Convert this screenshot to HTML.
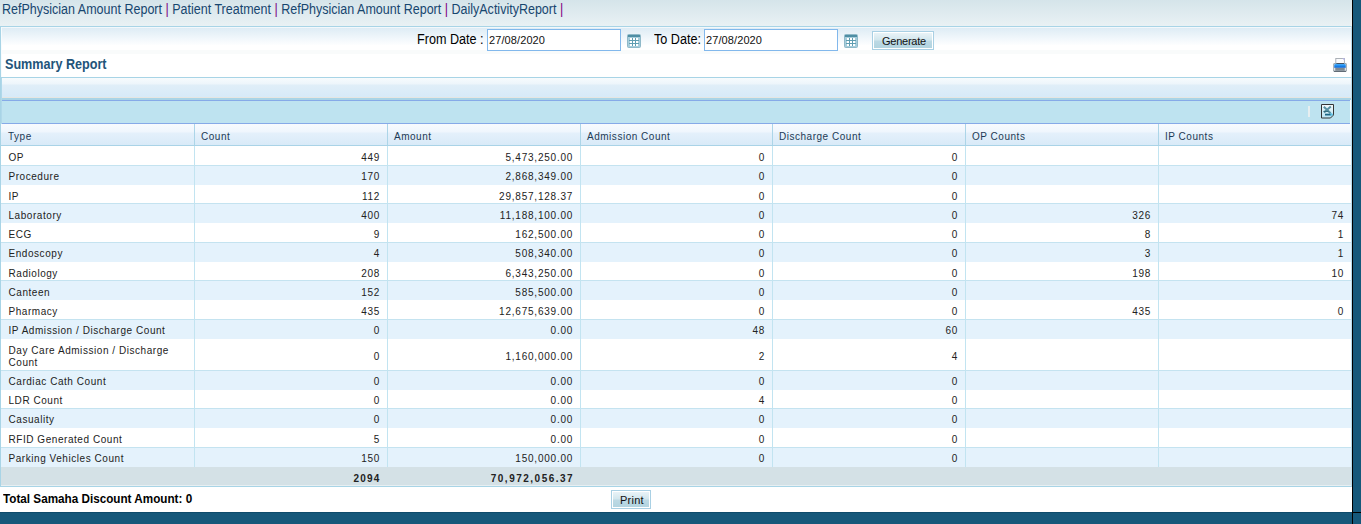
<!DOCTYPE html><html><head><meta charset="utf-8"><style>
*{margin:0;padding:0;box-sizing:border-box}
html,body{width:1361px;height:524px;overflow:hidden;background:#fff;font-family:"Liberation Sans",sans-serif}
.a{position:absolute}
.hl{position:absolute;height:1px}
.vl{position:absolute;width:1px}
.td{position:absolute;font-size:10px;letter-spacing:0.55px;color:#222;white-space:nowrap;line-height:12px}
.th{position:absolute;font-size:10px;letter-spacing:0.52px;color:#1d3a55;white-space:nowrap;line-height:12px}
.r{text-align:right}
</style></head><body>
<div class="a" style="left:0;top:0;width:1352px;height:26px;background:linear-gradient(#d5e4ea,#e9f1f4)"></div>
<div class="a" style="left:2px;top:1px;font-size:14px;transform:scaleX(0.894);transform-origin:0 0;color:#17466f;white-space:nowrap;line-height:16px">RefPhysician Amount Report <span style="color:#800080">|</span> Patient Treatment <span style="color:#800080">|</span> RefPhysician Amount Report <span style="color:#800080">|</span> DailyActivityReport <span style="color:#800080">|</span></div>
<div class="hl" style="left:0;top:26px;width:1352px;background:#a8d4e6"></div>
<div class="a" style="left:1px;top:27px;width:1350px;height:1px;background:#f3f8fb"></div>
<div class="a" style="left:1px;top:28px;width:1350px;height:17px;background:linear-gradient(#deecf5,#fdfeff)"></div>
<div class="a" style="left:1px;top:50px;width:1350px;height:4px;background:#f9fbfb"></div>
<div class="vl" style="left:1px;top:27px;height:50px;background:#f7fbfd"></div>
<div class="vl" style="left:0;top:26px;height:461px;background:#a8d4e6"></div>
<div class="vl" style="left:1351px;top:26px;height:461px;background:#b9dceb"></div>
<div class="a" style="left:417px;top:31px;font-size:14px;transform:scaleX(0.9);transform-origin:0 0;color:#000;white-space:pre;line-height:16px">From Date :</div>
<div class="a" style="left:487px;top:29px;width:134px;height:22px;border:1px solid #82b8ec;background:#fff"></div>
<div class="a" style="left:489px;top:34px;font-size:11px;letter-spacing:0.1px;color:#111;line-height:13px">27/08/2020</div>
<div class="a" style="left:654px;top:31px;font-size:14px;transform:scaleX(0.9);transform-origin:0 0;color:#000;white-space:pre;line-height:16px">To Date:</div>
<div class="a" style="left:704px;top:29px;width:134px;height:22px;border:1px solid #82b8ec;background:#fff"></div>
<div class="a" style="left:706px;top:34px;font-size:11px;letter-spacing:0.1px;color:#111;line-height:13px">27/08/2020</div>
<svg class="a" style="left:626.5px;top:33.5px" width="14" height="14" viewBox="0 0 14 14"><rect x="0.5" y="0.5" width="13" height="13" rx="1" fill="#a7cddb" stroke="#8fb9c9"/><rect x="1" y="1" width="12" height="2" fill="#4e8ea4"/><g fill="#fff"><rect x="3" y="4" width="2" height="2"/><rect x="6" y="4" width="2" height="2"/><rect x="9" y="4" width="2" height="2"/><rect x="3" y="7" width="2" height="2"/><rect x="6" y="7" width="2" height="2"/><rect x="9" y="7" width="2" height="2"/><rect x="3" y="10" width="2" height="2"/><rect x="6" y="10" width="2" height="2"/><rect x="9" y="10" width="2" height="2"/></g><g fill="#5f9db1"><rect x="2" y="6" width="10" height="1"/><rect x="2" y="9" width="10" height="1"/><rect x="5" y="4" width="1" height="8"/><rect x="8" y="4" width="1" height="8"/></g></svg>
<svg class="a" style="left:843.5px;top:33.5px" width="14" height="14" viewBox="0 0 14 14"><rect x="0.5" y="0.5" width="13" height="13" rx="1" fill="#a7cddb" stroke="#8fb9c9"/><rect x="1" y="1" width="12" height="2" fill="#4e8ea4"/><g fill="#fff"><rect x="3" y="4" width="2" height="2"/><rect x="6" y="4" width="2" height="2"/><rect x="9" y="4" width="2" height="2"/><rect x="3" y="7" width="2" height="2"/><rect x="6" y="7" width="2" height="2"/><rect x="9" y="7" width="2" height="2"/><rect x="3" y="10" width="2" height="2"/><rect x="6" y="10" width="2" height="2"/><rect x="9" y="10" width="2" height="2"/></g><g fill="#5f9db1"><rect x="2" y="6" width="10" height="1"/><rect x="2" y="9" width="10" height="1"/><rect x="5" y="4" width="1" height="8"/><rect x="8" y="4" width="1" height="8"/></g></svg>
<div class="a" style="left:872px;top:31px;width:62px;height:19px;border:1px solid #a9d0e4;background:#fff;padding:1px"><div style="width:100%;height:100%;background:linear-gradient(#e9f3f7 0%,#d3e7ee 45%,#bcd9e4 55%,#b2d4e0 100%)"></div></div><div class="a" style="left:882px;top:35px;font-size:11px;letter-spacing:-0.25px;color:#111;line-height:13px;white-space:nowrap">Generate</div>
<div class="a" style="left:5px;top:56px;font-size:14px;font-weight:bold;transform:scaleX(0.9);transform-origin:0 0;color:#22547a;line-height:16px">Summary Report</div>
<svg class="a" style="left:1332px;top:57px" width="16" height="16" viewBox="0 0 16 16"><defs><linearGradient id="pb" x1="0" y1="0" x2="0" y2="1"><stop offset="0" stop-color="#5ab4fa"/><stop offset="0.5" stop-color="#1c8df2"/><stop offset="1" stop-color="#0a5fcf"/></linearGradient></defs><rect x="3.8" y="1.5" width="8.6" height="7" fill="#fbfbfd" stroke="#a3a9b0" stroke-width="0.9"/><path d="M10.2 1.3h2.4v2.4z" fill="#b8b6ea"/><rect x="1" y="6" width="14" height="8.8" rx="1.6" fill="#9aa3ab"/><rect x="1.6" y="7" width="12.8" height="7" rx="1" fill="#c9d0d6"/><path d="M2.3 8.4q0-1.8 1.8-1.8h7.8q1.8 0 1.8 1.8v2.4h-11.4z" fill="url(#pb)"/><rect x="4.4" y="6.2" width="7.6" height="0.8" fill="#39424c"/><rect x="2.3" y="11" width="1" height="3" fill="#e3e8ec"/><rect x="12.7" y="11" width="1" height="3" fill="#e3e8ec"/><rect x="3.3" y="11" width="9.4" height="2.6" fill="#7f8a93"/><rect x="2" y="13.8" width="12" height="1" fill="#4f5a64"/></svg>
<div class="hl" style="left:0;top:77px;width:1352px;background:#a8d4e6"></div>
<div class="a" style="left:2px;top:78px;width:1349px;height:19px;background:linear-gradient(#f7fbfd 0,#edf5fb 6px,#e0eef8 7px,#d7eaf8 100%)"></div>
<div class="hl" style="left:2px;top:97px;width:1349px;background:#e6e6e2"></div>
<div class="a" style="left:2px;top:98px;width:1349px;height:2px;background:#a9d4e6"></div>
<div class="hl" style="left:2px;top:100px;width:1348px;background:#86aae8"></div>
<div class="a" style="left:2px;top:101px;width:1348px;height:22px;background:#bee3f0"></div>
<div class="hl" style="left:2px;top:123px;width:1348px;background:#86aae8"></div>
<div class="vl" style="left:1px;top:78px;height:409px;background:#b0d8ea"></div>
<div class="a" style="left:1308px;top:106px;width:2px;height:11px;background:#e6eef0"></div>
<svg class="a" style="left:1321px;top:104px" width="14" height="15" viewBox="0 0 14 15"><defs><linearGradient id="xb" x1="0" y1="0" x2="0" y2="1"><stop offset="0" stop-color="#f4f8f9"/><stop offset="1" stop-color="#b9e4f4"/></linearGradient></defs><path d="M0.5 0.5h12v10.5l-3 3h-9z" fill="url(#xb)" stroke="#343434"/><path d="M2.8 2.8L9.6 9.2M9.8 2.6L3 8.4" stroke="#4a8798" stroke-width="2" opacity="0.9"/><path d="M2.5 7.4h5" stroke="#2f6a7c" stroke-width="1"/><path d="M4 10.6h6" stroke="#1d6784" stroke-width="1.8"/><path d="M9.5 8.6l3 2-3 2z" fill="#63c3e6"/></svg>
<div class="a" style="left:1px;top:124px;width:1350px;height:21px;background:linear-gradient(#f8fbfe 0,#eff6fd 8px,#e4f0fb 9px,#d9eaf8 100%)"></div>
<div class="hl" style="left:1px;top:145px;width:1350px;background:#a9d3e7"></div>
<div class="th" style="left:8px;top:131px">Type</div>
<div class="th" style="left:201px;top:131px">Count</div>
<div class="th" style="left:394px;top:131px">Amount</div>
<div class="th" style="left:587px;top:131px">Admission Count</div>
<div class="th" style="left:779px;top:131px">Discharge Count</div>
<div class="th" style="left:972px;top:131px">OP Counts</div>
<div class="th" style="left:1165px;top:131px">IP Counts</div>
<div class="vl" style="left:194px;top:124px;height:21px;background:#acd5e8"></div>
<div class="vl" style="left:387px;top:124px;height:21px;background:#acd5e8"></div>
<div class="vl" style="left:580px;top:124px;height:21px;background:#acd5e8"></div>
<div class="vl" style="left:772px;top:124px;height:21px;background:#acd5e8"></div>
<div class="vl" style="left:965px;top:124px;height:21px;background:#acd5e8"></div>
<div class="vl" style="left:1158px;top:124px;height:21px;background:#acd5e8"></div>
<div class="a" style="left:1px;top:146px;width:1350px;height:20px;background:#ffffff"></div>
<div class="hl" style="left:1px;top:165px;width:1350px;background:#c4e3f0"></div>
<div class="td" style="left:8.5px;top:152px">OP</div>
<div class="td r" style="left:194px;width:186.2px;top:152px;letter-spacing:0.78px">449</div>
<div class="td r" style="left:387px;width:186.2px;top:152px;letter-spacing:0.78px">5,473,250.00</div>
<div class="td r" style="left:580px;width:185.2px;top:152px;letter-spacing:0.78px">0</div>
<div class="td r" style="left:772px;width:186.2px;top:152px;letter-spacing:0.78px">0</div>
<div class="a" style="left:1px;top:166px;width:1350px;height:19px;background:#e4f2fc"></div>
<div class="td" style="left:8.5px;top:171px">Procedure</div>
<div class="td r" style="left:194px;width:186.2px;top:171px;letter-spacing:0.78px">170</div>
<div class="td r" style="left:387px;width:186.2px;top:171px;letter-spacing:0.78px">2,868,349.00</div>
<div class="td r" style="left:580px;width:185.2px;top:171px;letter-spacing:0.78px">0</div>
<div class="td r" style="left:772px;width:186.2px;top:171px;letter-spacing:0.78px">0</div>
<div class="a" style="left:1px;top:185px;width:1350px;height:19px;background:#ffffff"></div>
<div class="hl" style="left:1px;top:203px;width:1350px;background:#c4e3f0"></div>
<div class="td" style="left:8.5px;top:191px">IP</div>
<div class="td r" style="left:194px;width:186.2px;top:191px;letter-spacing:0.78px">112</div>
<div class="td r" style="left:387px;width:186.2px;top:191px;letter-spacing:0.78px">29,857,128.37</div>
<div class="td r" style="left:580px;width:185.2px;top:191px;letter-spacing:0.78px">0</div>
<div class="td r" style="left:772px;width:186.2px;top:191px;letter-spacing:0.78px">0</div>
<div class="a" style="left:1px;top:204px;width:1350px;height:19px;background:#e4f2fc"></div>
<div class="td" style="left:8.5px;top:210px">Laboratory</div>
<div class="td r" style="left:194px;width:186.2px;top:210px;letter-spacing:0.78px">400</div>
<div class="td r" style="left:387px;width:186.2px;top:210px;letter-spacing:0.78px">11,188,100.00</div>
<div class="td r" style="left:580px;width:185.2px;top:210px;letter-spacing:0.78px">0</div>
<div class="td r" style="left:772px;width:186.2px;top:210px;letter-spacing:0.78px">0</div>
<div class="td r" style="left:965px;width:186.2px;top:210px;letter-spacing:0.78px">326</div>
<div class="td r" style="left:1158px;width:186.2px;top:210px;letter-spacing:0.78px">74</div>
<div class="a" style="left:1px;top:223px;width:1350px;height:20px;background:#ffffff"></div>
<div class="hl" style="left:1px;top:242px;width:1350px;background:#c4e3f0"></div>
<div class="td" style="left:8.5px;top:229px">ECG</div>
<div class="td r" style="left:194px;width:186.2px;top:229px;letter-spacing:0.78px">9</div>
<div class="td r" style="left:387px;width:186.2px;top:229px;letter-spacing:0.78px">162,500.00</div>
<div class="td r" style="left:580px;width:185.2px;top:229px;letter-spacing:0.78px">0</div>
<div class="td r" style="left:772px;width:186.2px;top:229px;letter-spacing:0.78px">0</div>
<div class="td r" style="left:965px;width:186.2px;top:229px;letter-spacing:0.78px">8</div>
<div class="td r" style="left:1158px;width:186.2px;top:229px;letter-spacing:0.78px">1</div>
<div class="a" style="left:1px;top:243px;width:1350px;height:19px;background:#e4f2fc"></div>
<div class="td" style="left:8.5px;top:248px">Endoscopy</div>
<div class="td r" style="left:194px;width:186.2px;top:248px;letter-spacing:0.78px">4</div>
<div class="td r" style="left:387px;width:186.2px;top:248px;letter-spacing:0.78px">508,340.00</div>
<div class="td r" style="left:580px;width:185.2px;top:248px;letter-spacing:0.78px">0</div>
<div class="td r" style="left:772px;width:186.2px;top:248px;letter-spacing:0.78px">0</div>
<div class="td r" style="left:965px;width:186.2px;top:248px;letter-spacing:0.78px">3</div>
<div class="td r" style="left:1158px;width:186.2px;top:248px;letter-spacing:0.78px">1</div>
<div class="a" style="left:1px;top:262px;width:1350px;height:19px;background:#ffffff"></div>
<div class="hl" style="left:1px;top:280px;width:1350px;background:#c4e3f0"></div>
<div class="td" style="left:8.5px;top:268px">Radiology</div>
<div class="td r" style="left:194px;width:186.2px;top:268px;letter-spacing:0.78px">208</div>
<div class="td r" style="left:387px;width:186.2px;top:268px;letter-spacing:0.78px">6,343,250.00</div>
<div class="td r" style="left:580px;width:185.2px;top:268px;letter-spacing:0.78px">0</div>
<div class="td r" style="left:772px;width:186.2px;top:268px;letter-spacing:0.78px">0</div>
<div class="td r" style="left:965px;width:186.2px;top:268px;letter-spacing:0.78px">198</div>
<div class="td r" style="left:1158px;width:186.2px;top:268px;letter-spacing:0.78px">10</div>
<div class="a" style="left:1px;top:281px;width:1350px;height:19px;background:#e4f2fc"></div>
<div class="td" style="left:8.5px;top:287px">Canteen</div>
<div class="td r" style="left:194px;width:186.2px;top:287px;letter-spacing:0.78px">152</div>
<div class="td r" style="left:387px;width:186.2px;top:287px;letter-spacing:0.78px">585,500.00</div>
<div class="td r" style="left:580px;width:185.2px;top:287px;letter-spacing:0.78px">0</div>
<div class="td r" style="left:772px;width:186.2px;top:287px;letter-spacing:0.78px">0</div>
<div class="a" style="left:1px;top:300px;width:1350px;height:20px;background:#ffffff"></div>
<div class="hl" style="left:1px;top:319px;width:1350px;background:#c4e3f0"></div>
<div class="td" style="left:8.5px;top:306px">Pharmacy</div>
<div class="td r" style="left:194px;width:186.2px;top:306px;letter-spacing:0.78px">435</div>
<div class="td r" style="left:387px;width:186.2px;top:306px;letter-spacing:0.78px">12,675,639.00</div>
<div class="td r" style="left:580px;width:185.2px;top:306px;letter-spacing:0.78px">0</div>
<div class="td r" style="left:772px;width:186.2px;top:306px;letter-spacing:0.78px">0</div>
<div class="td r" style="left:965px;width:186.2px;top:306px;letter-spacing:0.78px">435</div>
<div class="td r" style="left:1158px;width:186.2px;top:306px;letter-spacing:0.78px">0</div>
<div class="a" style="left:1px;top:320px;width:1350px;height:19px;background:#e4f2fc"></div>
<div class="td" style="left:8.5px;top:325px">IP Admission / Discharge Count</div>
<div class="td r" style="left:194px;width:186.2px;top:325px;letter-spacing:0.78px">0</div>
<div class="td r" style="left:387px;width:186.2px;top:325px;letter-spacing:0.78px">0.00</div>
<div class="td r" style="left:580px;width:185.2px;top:325px;letter-spacing:0.78px">48</div>
<div class="td r" style="left:772px;width:186.2px;top:325px;letter-spacing:0.78px">60</div>
<div class="a" style="left:1px;top:339px;width:1350px;height:32px;background:#ffffff"></div>
<div class="hl" style="left:1px;top:370px;width:1350px;background:#c4e3f0"></div>
<div class="td" style="left:8.5px;top:345px">Day Care Admission / Discharge<br>Count</div>
<div class="td r" style="left:194px;width:186.2px;top:351px;letter-spacing:0.78px">0</div>
<div class="td r" style="left:387px;width:186.2px;top:351px;letter-spacing:0.78px">1,160,000.00</div>
<div class="td r" style="left:580px;width:185.2px;top:351px;letter-spacing:0.78px">2</div>
<div class="td r" style="left:772px;width:186.2px;top:351px;letter-spacing:0.78px">4</div>
<div class="a" style="left:1px;top:371px;width:1350px;height:19px;background:#e4f2fc"></div>
<div class="td" style="left:8.5px;top:376px">Cardiac Cath Count</div>
<div class="td r" style="left:194px;width:186.2px;top:376px;letter-spacing:0.78px">0</div>
<div class="td r" style="left:387px;width:186.2px;top:376px;letter-spacing:0.78px">0.00</div>
<div class="td r" style="left:580px;width:185.2px;top:376px;letter-spacing:0.78px">0</div>
<div class="td r" style="left:772px;width:186.2px;top:376px;letter-spacing:0.78px">0</div>
<div class="a" style="left:1px;top:390px;width:1350px;height:19px;background:#ffffff"></div>
<div class="hl" style="left:1px;top:408px;width:1350px;background:#c4e3f0"></div>
<div class="td" style="left:8.5px;top:395px">LDR Count</div>
<div class="td r" style="left:194px;width:186.2px;top:395px;letter-spacing:0.78px">0</div>
<div class="td r" style="left:387px;width:186.2px;top:395px;letter-spacing:0.78px">0.00</div>
<div class="td r" style="left:580px;width:185.2px;top:395px;letter-spacing:0.78px">4</div>
<div class="td r" style="left:772px;width:186.2px;top:395px;letter-spacing:0.78px">0</div>
<div class="a" style="left:1px;top:409px;width:1350px;height:19px;background:#e4f2fc"></div>
<div class="td" style="left:8.5px;top:414px">Casuality</div>
<div class="td r" style="left:194px;width:186.2px;top:414px;letter-spacing:0.78px">0</div>
<div class="td r" style="left:387px;width:186.2px;top:414px;letter-spacing:0.78px">0.00</div>
<div class="td r" style="left:580px;width:185.2px;top:414px;letter-spacing:0.78px">0</div>
<div class="td r" style="left:772px;width:186.2px;top:414px;letter-spacing:0.78px">0</div>
<div class="a" style="left:1px;top:428px;width:1350px;height:20px;background:#ffffff"></div>
<div class="hl" style="left:1px;top:447px;width:1350px;background:#c4e3f0"></div>
<div class="td" style="left:8.5px;top:434px">RFID Generated Count</div>
<div class="td r" style="left:194px;width:186.2px;top:434px;letter-spacing:0.78px">5</div>
<div class="td r" style="left:387px;width:186.2px;top:434px;letter-spacing:0.78px">0.00</div>
<div class="td r" style="left:580px;width:185.2px;top:434px;letter-spacing:0.78px">0</div>
<div class="td r" style="left:772px;width:186.2px;top:434px;letter-spacing:0.78px">0</div>
<div class="a" style="left:1px;top:448px;width:1350px;height:19px;background:#e4f2fc"></div>
<div class="td" style="left:8.5px;top:453px">Parking Vehicles Count</div>
<div class="td r" style="left:194px;width:186.2px;top:453px;letter-spacing:0.78px">150</div>
<div class="td r" style="left:387px;width:186.2px;top:453px;letter-spacing:0.78px">150,000.00</div>
<div class="td r" style="left:580px;width:185.2px;top:453px;letter-spacing:0.78px">0</div>
<div class="td r" style="left:772px;width:186.2px;top:453px;letter-spacing:0.78px">0</div>
<div class="vl" style="left:194px;top:146px;height:321px;background:#c2e4f1"></div>
<div class="vl" style="left:387px;top:146px;height:321px;background:#c2e4f1"></div>
<div class="vl" style="left:580px;top:146px;height:321px;background:#c2e4f1"></div>
<div class="vl" style="left:772px;top:146px;height:321px;background:#c2e4f1"></div>
<div class="vl" style="left:965px;top:146px;height:321px;background:#c2e4f1"></div>
<div class="vl" style="left:1158px;top:146px;height:321px;background:#c2e4f1"></div>
<div class="a" style="left:1px;top:467px;width:1350px;height:18px;background:#d4e1e6"></div>
<div class="hl" style="left:1px;top:485px;width:1350px;background:#e7eff2"></div>
<div class="td r" style="left:194px;width:186.7px;top:473px;font-weight:bold;letter-spacing:1.25px">2094</div>
<div class="td r" style="left:387px;width:187.2px;top:473px;font-weight:bold;letter-spacing:1.5px">70,972,056.37</div>
<div class="hl" style="left:0;top:486px;width:1352px;background:#a8d4e6"></div>
<div class="a" style="left:3px;top:492px;font-size:13px;font-weight:bold;transform:scaleX(0.9);transform-origin:0 0;color:#000;line-height:14px;white-space:nowrap">Total Samaha Discount Amount: 0</div>
<div class="a" style="left:611px;top:490px;width:40px;height:19px;border:1px solid #a9d0e4;background:#fff;padding:1px"><div style="width:100%;height:100%;background:linear-gradient(#e9f3f7 0%,#d3e7ee 45%,#bcd9e4 55%,#b2d4e0 100%)"></div></div><div class="a" style="left:620px;top:494px;font-size:11px;letter-spacing:0.25px;color:#111;line-height:13px;white-space:nowrap">Print</div>
<div class="a" style="left:0;top:512px;width:1352px;height:12px;background:#16587a"></div>
<div class="hl" style="left:0;top:512px;width:1352px;background:#0f4b6b"></div>
<div class="a" style="left:1352px;top:0;width:9px;height:524px;background:#16587a"></div>
<div class="vl" style="left:1352px;top:0;height:524px;background:#000"></div>
<div class="hl" style="left:1352px;top:512px;width:9px;background:#000"></div>
</body></html>
